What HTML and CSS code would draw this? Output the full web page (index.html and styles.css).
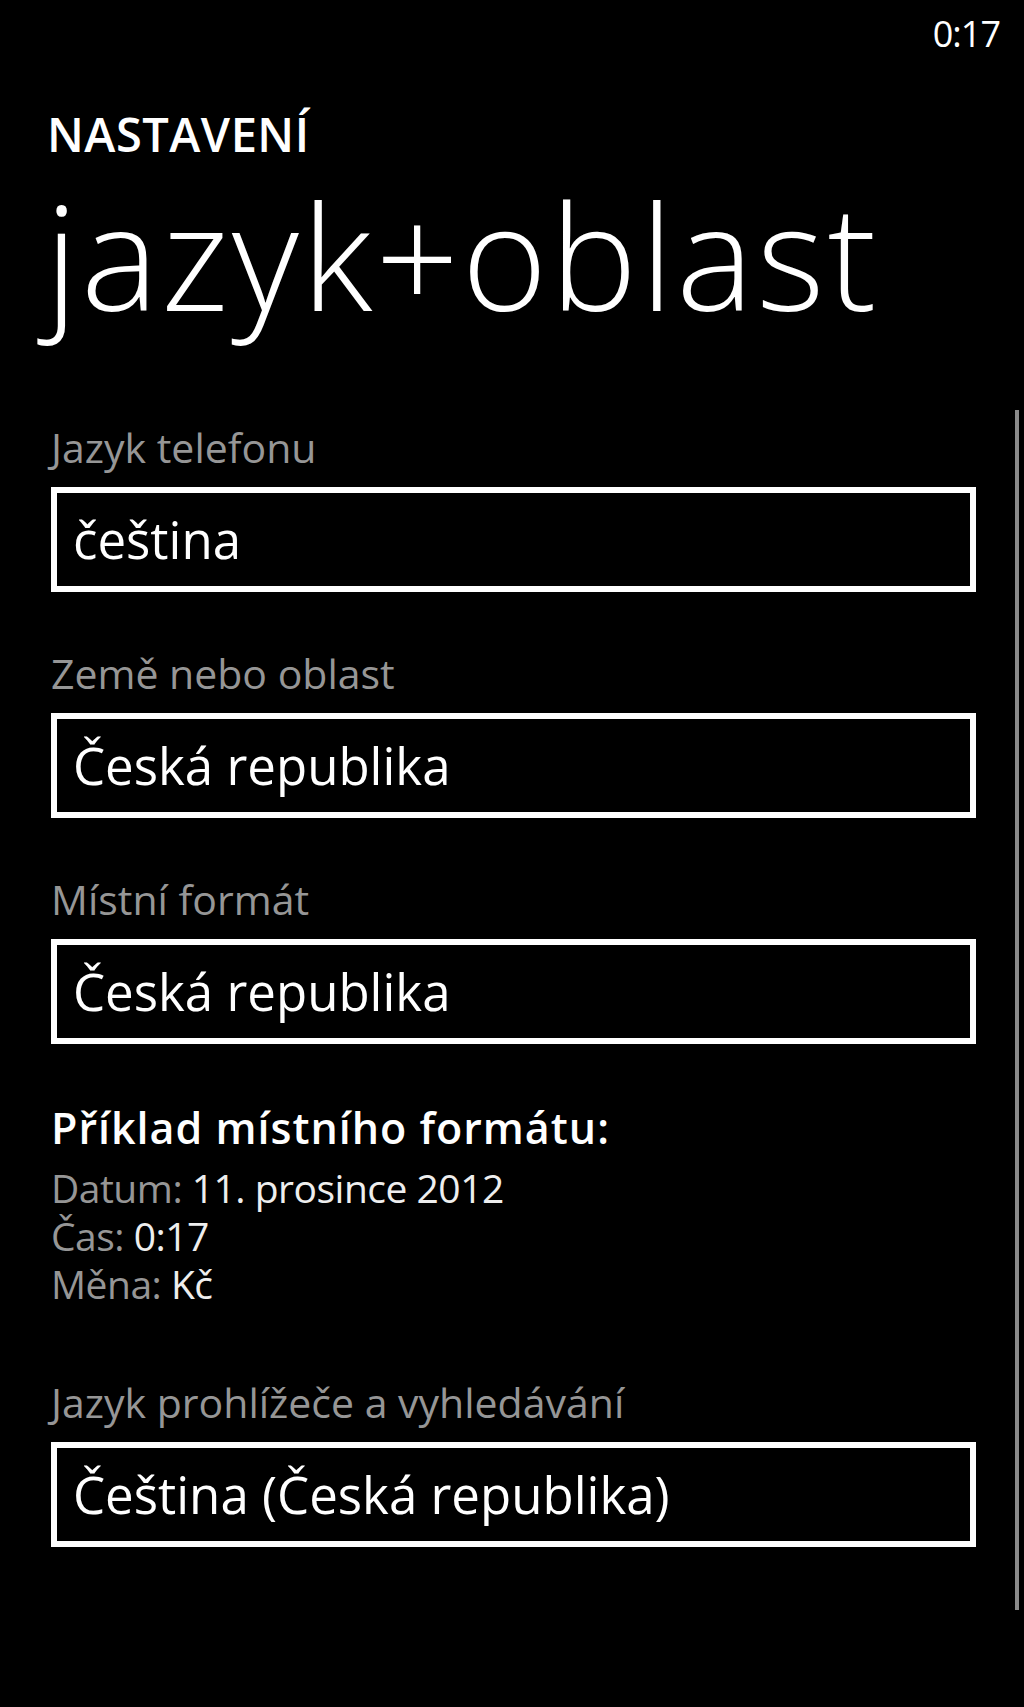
FILE: index.html
```html
<!DOCTYPE html>
<html lang="cs">
<head>
<meta charset="utf-8">
<title>jazyk+oblast</title>
<link rel="stylesheet" href="styles.css">
</head>
<body>
<div class="phone">
  <header class="status">
    <span class="clock">0:17</span>
  </header>
  <div class="titles">
    <div class="app-title">NASTAVENÍ</div>
    <h1 class="page-title">jazyk+oblast</h1>
  </div>
  <main class="content">
    <div class="scroll-indicator"></div>
    <section class="field">
      <div class="label">Jazyk telefonu</div>
      <div class="box">čeština</div>
    </section>
    <section class="field">
      <div class="label">Země nebo oblast</div>
      <div class="box">Česká republika</div>
    </section>
    <section class="field">
      <div class="label">Místní formát</div>
      <div class="box">Česká republika</div>
    </section>
    <section class="example">
      <div class="example-title">Příklad místního formátu:</div>
      <div class="example-lines">
        <div class="example-line"><span class="key">Datum:</span> 11. prosince 2012</div>
        <div class="example-line"><span class="key">Čas:</span> 0:17</div>
        <div class="example-line"><span class="key">Měna:</span> Kč</div>
      </div>
    </section>
    <section class="field field-last">
      <div class="label">Jazyk prohlížeče a vyhledávání</div>
      <div class="box">Čeština (Česká republika)</div>
    </section>
  </main>
</div>
</body>
</html>
```

FILE: styles.css
```css
html, body {
  margin: 0;
  padding: 0;
  background: #000;
}

body {
  color: #fff;
  font-family: "Open Sans", "Noto Sans", sans-serif;
}

.phone {
  width: 1024px;
  height: 1707px;
  background: #000;
  overflow: hidden;
}

.status {
  height: 68px;
  display: flex;
  justify-content: flex-end;
  align-items: center;
  padding-right: 24px;
}

.clock {
  font-size: 36px;
  line-height: 68px;
  color: #fff;
  letter-spacing: -1px;
}

.titles {
  padding-left: 47px;
}

.app-title {
  margin-top: 34px;
  font-size: 47px;
  line-height: 64px;
  font-weight: 600;
  letter-spacing: 0.5px;
}

.page-title {
  margin: 9px 0 0 -2px;
  font-size: 146px;
  line-height: 160px;
  font-weight: 300;
  letter-spacing: 3px;
}

.content {
  position: relative;
  padding: 84px 48px 0 51px;
}

.scroll-indicator {
  position: absolute;
  top: 75px;
  right: 5px;
  width: 4px;
  height: 1200px;
  background: #8a8a8a;
}

.field {
  margin-top: 53px;
}

.field:first-of-type {
  margin-top: 0;
}

.label {
  font-size: 41px;
  line-height: 56px;
  color: #969696;
}

.box {
  margin-top: 12px;
  border: 6px solid #fff;
  height: 93px;
  padding-left: 16px;
  font-size: 51px;
  line-height: 93px;
  color: #fff;
  white-space: nowrap;
}

.example {
  margin-top: 60px;
}

.example-title {
  font-size: 43px;
  line-height: 48px;
  font-weight: 600;
  letter-spacing: 1px;
  color: #fff;
}

.example-lines {
  margin-top: 12px;
}

.example-line {
  font-size: 39px;
  line-height: 48px;
  letter-spacing: -0.5px;
  color: #eee;
}

.key {
  color: #969696;
}

.field-last {
  margin-top: 66px;
}
```
